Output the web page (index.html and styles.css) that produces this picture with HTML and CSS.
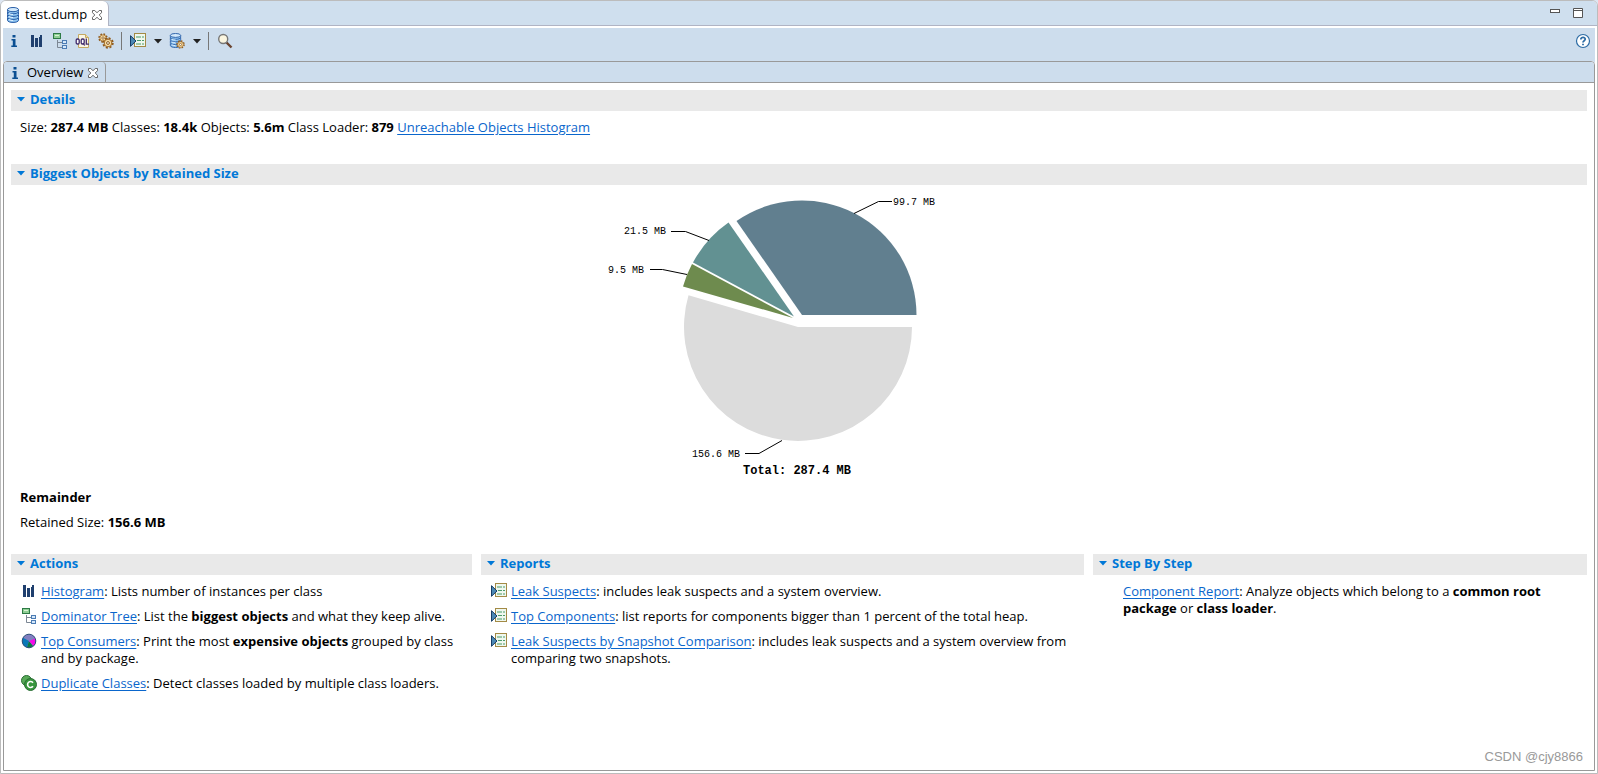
FILE: index.html
```html
<!DOCTYPE html>
<html lang="en">
<head>
<meta charset="utf-8">
<title>test.dump</title>
<link rel="stylesheet" href="styles.css">
</head>
<body>
<svg class="defs" aria-hidden="true">
  <defs>
    <symbol id="db" viewBox="0 0 16 16">
      <g fill="#8fc4f0" stroke="#2a5fa8">
        <path d="M2.500 11v2.200c0 3 11 3 11 0V11"/>
        <path d="M2.500 8v2.200c0 3 11 3 11 0V8"/>
        <path d="M2.500 5v2.200c0 3 11 3 11 0V5"/>
        <path d="M2.500 2.500v2c0 3 11 3 11 0v-2"/>
        <ellipse cx="8" cy="2.600" rx="5.500" ry="2.100" fill="#d3e9fb"/>
      </g>
      <path d="M4 6.500q2 1 4 1M4 9.500q2 1 4 1M4 12.500q2 1 4 1" stroke="#e4f3ff" fill="none"/>
    </symbol>
    <symbol id="info" viewBox="0 0 16 16">
      <path d="M6.500 2h3v2.500h-3zM5.500 6h4v6.500h1.500V14H5.300v-1.500h1.500V7.500H5.500z" fill="#0b4f92"/>
    </symbol>
    <symbol id="bars" viewBox="0 0 16 16">
      <path d="M2 2h3v12H2zM6 5h3v9H6zM10 4h1v10h-1zM11 2h2v12h-2z" fill="#1f3f6e"/>
    </symbol>
    <symbol id="tree" viewBox="0 0 16 16">
      <path d="M5.500 7v7.500h5M5.500 9.500h5" stroke="#7c8794" fill="none"/>
      <rect x="1.500" y=".5" width="7" height="5" fill="#8fcf94" stroke="#2d7a45"/>
      <path d="M3 2.500h4" stroke="#d9f3d3"/>
      <rect x="10.500" y="7.500" width="4" height="3" fill="#d5e8fa" stroke="#4c7cb4"/>
      <rect x="10.500" y="12.500" width="4" height="3" fill="#d5e8fa" stroke="#4c7cb4"/>
    </symbol>
    <symbol id="gearshape" viewBox="0 0 12 12">
      <circle cx="6" cy="6" r="4.700" fill="none" stroke="#8f5a1c" stroke-width="2" stroke-dasharray="2 1.690"/>
      <circle cx="6" cy="6" r="3.800" fill="#f6dca4" stroke="#a36c28"/>
      <circle cx="6" cy="6" r="1.400" fill="#fff" stroke="#8b5a1c"/>
    </symbol>
    <symbol id="report" viewBox="0 0 16 16">
      <rect x="4.500" y=".5" width="11" height="13" fill="#eff7ee" stroke="#a38a45"/>
      <path d="M6 4h5M12 4h2M7 7.500h4M12 7.500h2M6 11h5M12 11h2" stroke="#4b9a68"/>
      <path d="M.5 2.700v10.600L6 8z" fill="#4b88b4" stroke="#173d66"/>
    </symbol>
    <symbol id="close" viewBox="0 0 12 12">
      <path d="M1.500 1.500h2.300L6 3.800 8.200 1.500h2.300v2.200L8.200 6l2.300 2.300v2.200H8.200L6 8.200l-2.200 2.300H1.500V8.300L3.800 6 1.500 3.700z" fill="#fff" stroke="#666"/>
    </symbol>
    <symbol id="caret" viewBox="0 0 8 5">
      <path d="M0 0h8L4 4.500z" fill="currentColor"/>
    </symbol>
  </defs>
</svg>

<main class="window">
  <header class="tabbar">
    <div class="tab">
      <svg class="icon"><use href="#db"/></svg>
      <span>test.dump</span>
      <button class="close" aria-label="Close test.dump"><svg><use href="#close"/></svg></button>
    </div>
    <div class="window-buttons">
      <button aria-label="Minimize"><svg viewBox="0 0 10 10"><rect x=".5" y="1.500" width="9" height="3" fill="#fff" stroke="#555"/></svg></button>
      <button aria-label="Maximize"><svg viewBox="0 0 10 10"><path d="M.5.500h9v9h-9zM0 2.500h10" fill="#fff" stroke="#555"/></svg></button>
    </div>
  </header>

  <nav class="toolbar" aria-label="Tools">
    <button class="tool" aria-label="Overview"><svg class="icon"><use href="#info"/></svg></button>
    <button class="tool" aria-label="Histogram"><svg class="icon"><use href="#bars"/></svg></button>
    <button class="tool" aria-label="Dominator tree"><svg class="icon"><use href="#tree"/></svg></button>
    <button class="tool" aria-label="Object query"><svg class="icon" viewBox="0 0 16 16">
      <path d="M3.500 1.500h7l3 3v10h-10z" fill="#fbf6e4" stroke="#c4a963"/><path d="M10.500 1.500v3h3" fill="#ecd9a0" stroke="#c4a963"/>
      <g fill="none" stroke="#3f2a6b" stroke-width="1.300"><rect x="1.200" y="6" width="3" height="5" rx="1.200" fill="#fff"/><rect x="6.200" y="6" width="3" height="5" rx="1.200" fill="#fff"/><path d="M8 10l1.700 2.500M11.300 5.400v5.700h2.600"/></g>
    </svg></button>
    <button class="tool" aria-label="Run query"><svg class="icon" viewBox="0 0 16 16">
      <use href="#gearshape" width="10" height="10"/><use href="#gearshape" x="4" y="4" width="12" height="12"/>
    </svg></button>
    <span class="separator"></span>
    <button class="tool" aria-label="Run report"><svg class="icon"><use href="#report"/></svg></button>
    <button class="drop" aria-label="Report menu"><svg class="caret"><use href="#caret"/></svg></button>
    <button class="tool" aria-label="Query browser"><svg class="icon" viewBox="0 0 16 16">
      <use href="#db" x="-1" width="15" height="15"/><use href="#gearshape" x="7" y="7" width="9" height="9"/>
    </svg></button>
    <button class="drop" aria-label="Query browser menu"><svg class="caret"><use href="#caret"/></svg></button>
    <span class="separator"></span>
    <button class="tool" aria-label="Find object"><svg class="icon" viewBox="0 0 16 16">
      <path d="M9.500 9.500l5 5" stroke="#6b4430" stroke-width="2.400"/><circle cx="6.200" cy="6" r="4.500" fill="#fbf6e0" stroke="#777" stroke-width="1.400"/>
    </svg></button>
    <button class="tool help" aria-label="Help"><svg class="icon" viewBox="0 0 16 16">
      <circle cx="8" cy="8" r="6.500" fill="#fff" stroke="#2d6ca5" stroke-width="1.200"/>
      <path d="M5.800 6.600c0-3 4.600-2.700 4.400-.3C10.100 7.800 8 7.600 8 9.500M8 10.700v1.600" fill="none" stroke="#2d6ca5" stroke-width="1.800"/>
    </svg></button>
  </nav>

  <section class="editor">
    <div class="subtabs">
      <div class="subtab">
        <svg class="icon"><use href="#info"/></svg>
        <span>Overview</span>
        <button class="close" aria-label="Close Overview"><svg><use href="#close"/></svg></button>
      </div>
    </div>

    <div class="page">
      <section class="details">
        <h2><button><svg class="caret"><use href="#caret"/></svg>Details</button></h2>
        <p>Size: <b>287.4 MB</b> Classes: <b>18.4k</b> Objects: <b>5.6m</b> Class Loader: <b>879</b> <a href="#">Unreachable Objects Histogram</a></p>
      </section>

      <section class="biggest">
        <h2><button><svg class="caret"><use href="#caret"/></svg>Biggest Objects by Retained Size</button></h2>
        <svg class="chart" viewBox="600 185 398 300" role="img" aria-label="Biggest objects by retained size">
          <path d="M802 315H916.500A114.500 114.500 0 0 0 736.500 221z" fill="#617f8f"/>
          <path d="M794 316.500L728.500 222.500A114.500 114.500 0 0 0 693 262.500z" fill="#629192"/>
          <path d="M793 318L692 264A114.500 114.500 0 0 0 683 286.500z" fill="#6e8b4e"/>
          <path d="M798 327L688.500 295.200A114 114 0 1 0 912 327z" fill="#dcdcdc"/>
          <g class="leaders">
            <path d="M854 213.500l24.500-12H892"/>
            <path d="M709 240.500l-23.500-9H671"/>
            <path d="M687 274.500l-24.500-5H650"/>
            <path d="M782 440.500l-23 13H745"/>
          </g>
          <text x="893" y="205">99.7 MB</text>
          <text x="624" y="234">21.5 MB</text>
          <text x="608" y="273">9.5 MB</text>
          <text x="692" y="457">156.6 MB</text>
          <text class="total" x="797" y="474">Total: 287.4 MB</text>
        </svg>
        <p><b>Remainder</b></p>
        <p>Retained Size: <b>156.6 MB</b></p>
      </section>

      <div class="columns">
        <section>
          <h2><button><svg class="caret"><use href="#caret"/></svg>Actions</button></h2>
          <ul>
            <li><svg class="icon"><use href="#bars"/></svg><span><a href="#">Histogram</a>: Lists number of instances per class</span></li>
            <li><svg class="icon"><use href="#tree"/></svg><span><a href="#">Dominator Tree</a>: List the <b>biggest objects</b> and what they keep alive.</span></li>
            <li><svg class="icon" viewBox="0 0 16 16"><circle cx="8" cy="8" r="6.800" fill="#827fc0"/><path d="M8 8H1.200A6.800 6.800 0 0 0 6 14.500z" fill="#0878b8"/><path d="M8 8l-2 6.500a6.800 6.800 0 0 0 6-1.500z" fill="#087a42"/><path d="M8 8l4.500 5a6.800 6.800 0 0 0 1.800-7.500z" fill="#f40be8"/><path d="M8 8L2 4.800A6.800 6.800 0 0 0 1.200 8z" fill="#0878b8"/><circle cx="8" cy="8" r="6.800" fill="none" stroke="#2e4f78"/></svg><span><a href="#">Top Consumers</a>: Print the most <b>expensive objects</b> grouped by class and by package.</span></li>
            <li><svg class="icon" viewBox="0 0 16 16"><circle cx="5.500" cy="5.500" r="5" fill="#58a957" stroke="#2a6e35"/><circle cx="9.500" cy="9.500" r="6" fill="#38963d" stroke="#2a6e35"/><path d="M12 7.700a3 3 0 1 0 0 3.600" fill="none" stroke="#fff" stroke-width="1.600"/></svg><span><a href="#">Duplicate Classes</a>: Detect classes loaded by multiple class loaders.</span></li>
          </ul>
        </section>
        <section>
          <h2><button><svg class="caret"><use href="#caret"/></svg>Reports</button></h2>
          <ul>
            <li><svg class="icon"><use href="#report"/></svg><span><a href="#">Leak Suspects</a>: includes leak suspects and a system overview.</span></li>
            <li><svg class="icon"><use href="#report"/></svg><span><a href="#">Top Components</a>: list reports for components bigger than 1 percent of the total heap.</span></li>
            <li><svg class="icon"><use href="#report"/></svg><span><a href="#">Leak Suspects by Snapshot Comparison</a>: includes leak suspects and a system overview from comparing two snapshots.</span></li>
          </ul>
        </section>
        <section>
          <h2><button><svg class="caret"><use href="#caret"/></svg>Step By Step</button></h2>
          <ul class="plain">
            <li><span><a href="#">Component Report</a>: Analyze objects which belong to a <b>common root package</b> or <b>class loader</b>.</span></li>
          </ul>
        </section>
      </div>
    </div>
  </section>
  <span class="watermark">CSDN @cjy8866</span>
</main>
</body>
</html>
```
FILE: styles.css
```css
* { box-sizing: border-box; }

body {
  margin: 0;
  background: #dde6f2;
  color: #000;
  font: 13px/17px "Open Sans", "Noto Sans", sans-serif;
}

button {
  display: flex;
  align-items: center;
  justify-content: center;
  padding: 0;
  border: 0;
  background: none;
  color: inherit;
  font: inherit;
}

svg { display: block; flex: none; }
a { color: #0a66cc; text-underline-offset: 2px; }
h2, p, ul { margin: 0; }
h2 { font-size: 13px; }

.defs { position: absolute; width: 0; height: 0; }
.icon { width: 16px; height: 16px; overflow: visible; }
.caret { width: 8px; height: 5px; }

.window {
  position: relative;
  display: flex;
  flex-direction: column;
  min-height: 100vh;
  padding: 0 2px 2px;
  border: 1px solid #bcbcbc;
  border-radius: 6px 6px 0 0;
  background: #fff;
}

.tabbar {
  display: flex;
  justify-content: space-between;
  height: 25px;
  margin: 0 -2px;
  border-bottom: 1px solid #b0b4c4;
  border-radius: 5px 5px 0 0;
  background: #cfdfee;
}

.tab {
  display: flex;
  align-items: center;
  gap: 4px;
  height: 25px;
  padding: 2px 5px 0 4px;
  border-right: 1px solid #b0b4c4;
  border-radius: 5px 6px 0 0;
  background: #fff;
}

.close { width: 12px; height: 12px; }
.close svg { width: 12px; height: 12px; }

.window-buttons { display: flex; gap: 13px; padding: 7px 14px 0 0; }
.window-buttons button { width: 10px; height: 10px; }
.window-buttons svg { width: 10px; height: 10px; }

.toolbar {
  display: flex;
  align-items: center;
  height: 33px;
  margin-top: 2px;
  padding-bottom: 7px;
  background: #cddded;
}

.tool { justify-content: flex-start; width: 23px; height: 24px; padding-left: 3px; }
.drop { width: 16px; height: 24px; color: #222; }
.separator { width: 1px; height: 18px; margin: 0 5px 0 3px; background: #777; }
.help { margin-left: auto; }

.editor {
  display: flex;
  flex: 1;
  flex-direction: column;
  border: 1px solid #999;
  border-radius: 4px 4px 0 0;
  box-shadow: 0 -4px 0 #cddded;
}

.subtabs {
  display: flex;
  height: 21px;
  border-bottom: 1px solid #999;
  border-radius: 3px 3px 0 0;
  background: #cddded;
}

.subtab {
  display: flex;
  align-items: center;
  gap: 4px;
  height: 21px;
  padding: 0 6px 0 3px;
  border-right: 1px solid #999;
  border-radius: 0 4px 0 0;
}

.page { padding: 7px 7px 16px; }

h2 button {
  justify-content: flex-start;
  gap: 5px;
  width: 100%;
  height: 21px;
  padding: 0 0 2px 6px;
  background: #e9e9e9;
  color: #0078d7;
}

.page p { padding: 8px 9px 0; }
.details { padding-bottom: 28px; }
.biggest { padding-bottom: 23px; }

.chart { width: 398px; height: 300px; margin: 0 auto -4px; }
.leaders { fill: none; stroke: #000; }
.chart text { font: 10px "Liberation Mono", monospace; }
.chart .total { font-size: 12px; font-weight: bold; text-anchor: middle; }

.columns {
  display: grid;
  grid-template-columns: 461fr 603fr 494fr;
  gap: 9px;
}

.columns ul {
  display: grid;
  gap: 8px;
  padding: 8px 10px 0;
  list-style: none;
}

.columns li { display: flex; gap: 4px; }
.columns .plain { padding-left: 30px; }

.watermark {
  position: absolute;
  right: 14px;
  bottom: 8px;
  color: #999;
  font: 13px/17px "Liberation Sans", sans-serif;
}
```
